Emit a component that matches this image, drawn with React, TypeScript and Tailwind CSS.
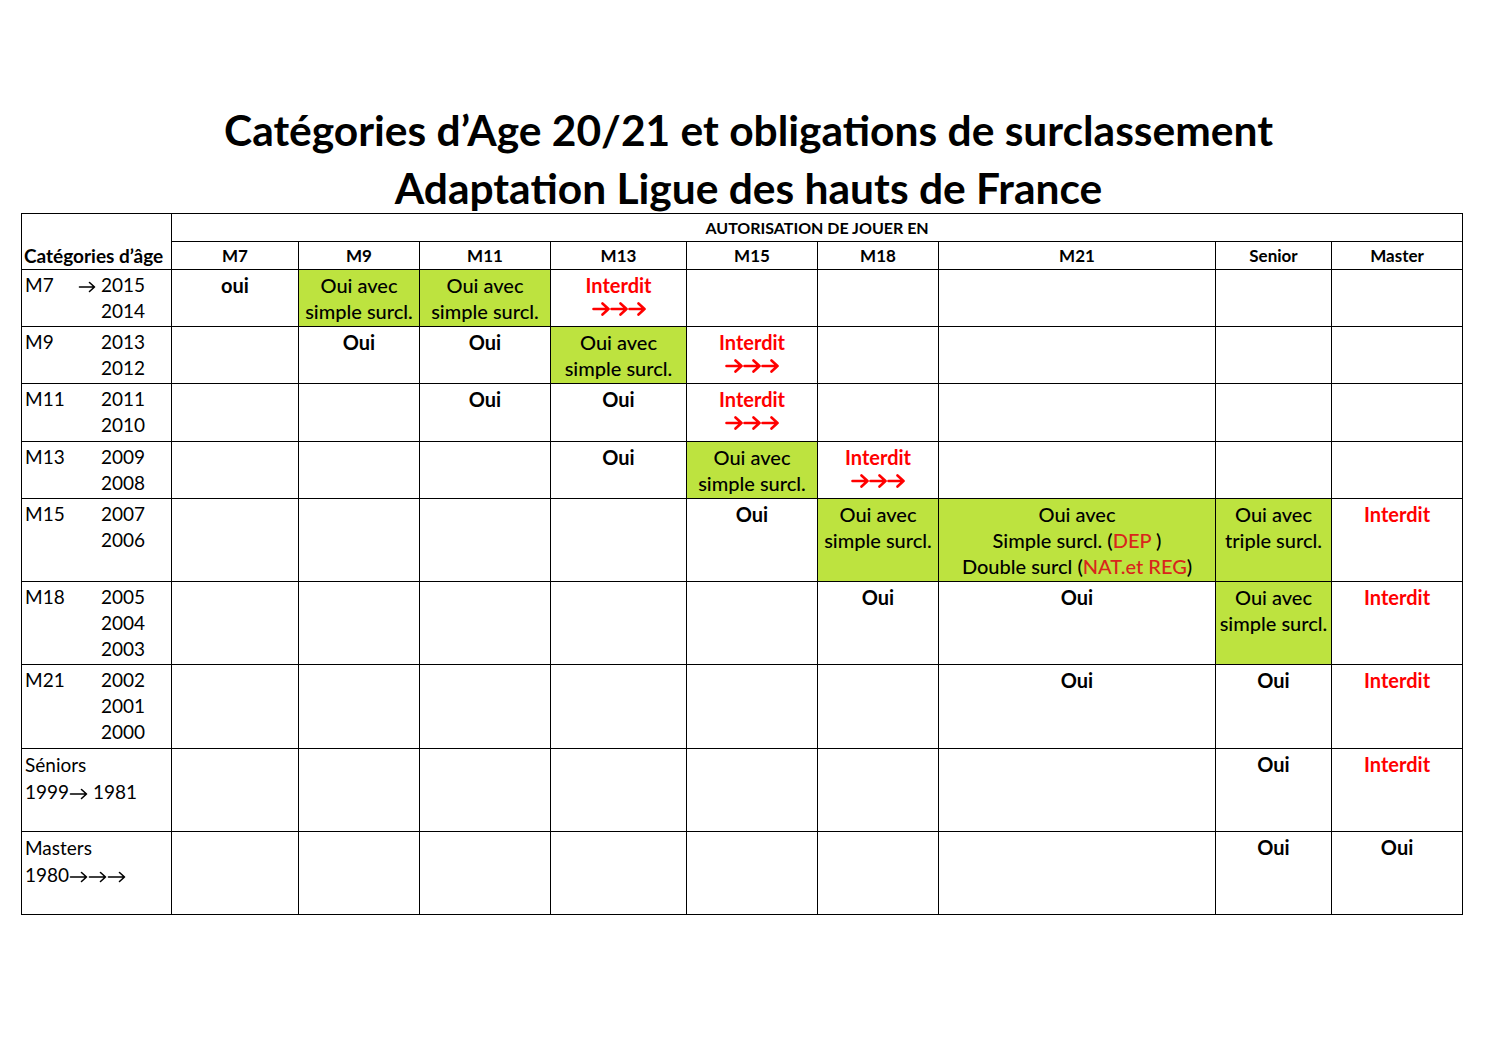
import React from "react";

type Cell =
    | null
    | { kind: "oui"; text: string }
    | { kind: "green"; lines: React.ReactNode[] }
    | { kind: "interdit"; arrows?: boolean };

interface Row {
    label: string;
    years: string[];
    height: string;
    cells: Cell[];
}

const simple: Cell = { kind: "green", lines: ["Oui avec", "simple surcl."] };
const oui: Cell = { kind: "oui", text: "Oui" };
const stop: Cell = { kind: "interdit", arrows: true };
const stopOnly: Cell = { kind: "interdit" };

// arrow drawn as a small svg: shaft plus open chevron head
const Arrow = ({ w = 18, h = 13, stroke = 1.6 }: { w?: number; h?: number; stroke?: number }) => (
    <svg width={w} height={h} viewBox={`0 0 ${w} ${h}`} className="inline-block align-[-1px]" fill="none" stroke="currentColor" strokeWidth={stroke} strokeLinecap="round" strokeLinejoin="round">
        <path d={`M1.5 ${h / 2} H${w - 1.5} M${w - 1.5 - h / 2 + 1} 1.5 L${w - 1.5} ${h / 2} L${w - 1.5 - h / 2 + 1} ${h - 1.5}`} />
    </svg>
);

const Arrows = ({ count, w, h, stroke }: { count: number; w?: number; h?: number; stroke?: number }) => (
    <>
        {Array.from({ length: count }).map((_, i) => (
            <Arrow key={i} w={w} h={h} stroke={stroke} />
        ))}
    </>
);

const rows: Row[] = [
    { label: "M7", years: ["2015", "2014"], height: "h-[57px]", cells: [{ kind: "oui", text: "oui" }, simple, simple, stop, null, null, null, null, null] },
    { label: "M9", years: ["2013", "2012"], height: "h-[57px]", cells: [null, oui, oui, simple, stop, null, null, null, null] },
    { label: "M11", years: ["2011", "2010"], height: "h-[58px]", cells: [null, null, oui, oui, stop, null, null, null, null] },
    { label: "M13", years: ["2009", "2008"], height: "h-[57px]", cells: [null, null, null, oui, simple, stop, null, null, null] },
    {
        label: "M15",
        years: ["2007", "2006"],
        height: "h-[83px]",
        cells: [
            null,
            null,
            null,
            null,
            oui,
            simple,
            {
                kind: "green",
                lines: [
                    "Oui avec",
                    <>Simple surcl. (<span className="text-[#d9261c]">DEP</span> )</>,
                    <>Double surcl (<span className="text-[#d9261c]">NAT.et REG</span>)</>,
                ],
            },
            { kind: "green", lines: ["Oui avec", "triple surcl."] },
            stopOnly,
        ],
    },
    { label: "M18", years: ["2005", "2004", "2003"], height: "h-[83px]", cells: [null, null, null, null, null, oui, oui, simple, stopOnly] },
    { label: "M21", years: ["2002", "2001", "2000"], height: "h-[84px]", cells: [null, null, null, null, null, null, oui, oui, stopOnly] },
];

const headers = ["M7", "M9", "M11", "M13", "M15", "M18", "M21", "Senior", "Master"];
const widths = ["w-[150px]", "w-[127px]", "w-[121px]", "w-[131px]", "w-[136px]", "w-[131px]", "w-[121px]", "w-[277px]", "w-[116px]", "w-[131px]"];

function renderCell(cell: Cell, key: number) {
    const base = "border border-black align-top text-center leading-[26px] pt-[2px] px-0 text-[20px]";
    if (!cell) return <td key={key} className={base} />;
    if (cell.kind === "green") {
        return (
            <td key={key} className={`${base} bg-[#bde33f] border-[#7f9c2c] font-medium`}>
                {cell.lines.map((l, i) => (
                    <div key={i}>{l}</div>
                ))}
            </td>
        );
    }
    if (cell.kind === "oui") {
        return (
            <td key={key} className={`${base} font-bold text-[19px]`}>
                {cell.text}
            </td>
        );
    }
    return (
        <td key={key} className={`${base} font-bold text-[#ff0000]`}>
            <div>Interdit</div>
            {cell.arrows && (
                <div className="flex justify-center pt-[4px]">
                    <Arrows count={3} w={18} h={14} stroke={2.6} />
                </div>
            )}
        </td>
    );
}

export default function App() {
    return (
        <div className="w-[1497px] h-[1058px] bg-white text-black font-['Lato',sans-serif] pt-[101px]">
            <div className="text-center text-[42.5px] font-bold leading-[58px] -mb-[4px]">
                <div>Catégories d’Age 20/21 et obligations de surclassement</div>
                <div>Adaptation Ligue des hauts de France</div>
            </div>
            <table className="ml-[21px] w-[1441px] table-fixed border-collapse">
                <colgroup>
                    {widths.map((w, i) => (
                        <col key={i} className={w} />
                    ))}
                </colgroup>
                <tbody>
                    <tr className="h-[28px]">
                        <td rowSpan={2} className="border border-black align-bottom text-left pl-[2px] pb-[2px] text-[19px] font-bold leading-[22px] whitespace-nowrap">
                            Catégories d’âge
                        </td>
                        <td colSpan={9} className="border border-black text-center align-middle text-[16px] font-bold leading-[18px]">
                            AUTORISATION DE JOUER EN
                        </td>
                    </tr>
                    <tr className="h-[28px]">
                        {headers.map((h) => (
                            <td key={h} className="border border-black text-center align-middle text-[17px] font-bold leading-[18px]">
                                {h}
                            </td>
                        ))}
                    </tr>
                    {rows.map((r) => (
                        <tr key={r.label} className={r.height}>
                            <td className="border border-black align-top pl-[3px] pt-[2px] leading-[26px] text-[19px] font-normal">
                                <div className="flex w-[120px] justify-between">
                                    <span>{r.label}</span>
                                    <div className="flex flex-col items-end">
                                        {r.years.map((y, i) => (
                                            <span key={y}>
                                                {i === 0 && r.label === "M7" && (
                                                    <span className="mr-[5px]">
                                                        <Arrow w={18} h={12} stroke={1.6} />
                                                    </span>
                                                )}
                                                {y}
                                            </span>
                                        ))}
                                    </div>
                                </div>
                            </td>
                            {r.cells.map((c, i) => renderCell(c, i))}
                        </tr>
                    ))}
                    <tr className="h-[83px]">
                        <td className="border border-black align-top pl-[3px] pt-[2px] leading-[27px] text-[19px]">
                            <div>Séniors</div>
                            <div>
                                1999<Arrow w={19} h={12} stroke={1.6} /> 1981
                            </div>
                        </td>
                        {[null, null, null, null, null, null, null, oui, stopOnly].map((c, i) => renderCell(c as Cell, i))}
                    </tr>
                    <tr className="h-[83px]">
                        <td className="border border-black align-top pl-[3px] pt-[2px] leading-[27px] text-[19px]">
                            <div>Masters</div>
                            <div>
                                1980<Arrows count={3} w={19} h={12} stroke={1.6} />
                            </div>
                        </td>
                        {[null, null, null, null, null, null, null, oui, oui].map((c, i) => renderCell(c as Cell, i))}
                    </tr>
                </tbody>
            </table>
        </div>
    );
}
